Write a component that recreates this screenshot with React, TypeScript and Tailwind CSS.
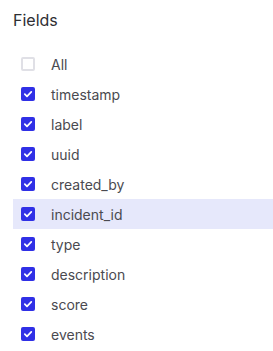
import React from "react";

const fields = [
  { name: "All", checked: false },
  { name: "timestamp", checked: true },
  { name: "label", checked: true },
  { name: "uuid", checked: true },
  { name: "created_by", checked: true },
  { name: "incident_id", checked: true, hover: true },
  { name: "type", checked: true },
  { name: "description", checked: true },
  { name: "score", checked: true },
  { name: "events", checked: true },
];

function Box({ checked }: { checked: boolean }) {
  if (!checked) {
    return <div className="w-[14px] h-[14px] rounded-[2px] border-2 border-[#e0e0e6] bg-white shrink-0" />;
  }
  return (
    <div className="w-[14px] h-[14px] rounded-[2px] bg-[#3030e6] shrink-0 flex items-center justify-center">
      <svg width="10" height="10" viewBox="0 0 10 10" fill="none">
        <path d="M1.8 5.2 L4 7.3 L8.3 2.8" stroke="white" strokeWidth="1.7" strokeLinecap="round" strokeLinejoin="round" />
      </svg>
    </div>
  );
}

export default function App() {
  return (
    <div className="w-[273px] h-[351px] bg-white pt-[10px]" style={{ fontFamily: "Inter, sans-serif" }}>
      <div className="pl-[13px] text-[16px] leading-[20px] text-[#2e2e33] mb-[19px]">Fields</div>
      <div className="pl-[13px]">
        {fields.map((f) => (
          <div
            key={f.name}
            className={
              "h-[30px] flex items-center pl-[8px] gap-[16px] " + (f.hover ? "bg-[#e6e8fb]" : "")
            }
          >
            <Box checked={f.checked} />
            <span className="text-[14px] text-[#4a4a50]">{f.name}</span>
          </div>
        ))}
      </div>
    </div>
  );
}
